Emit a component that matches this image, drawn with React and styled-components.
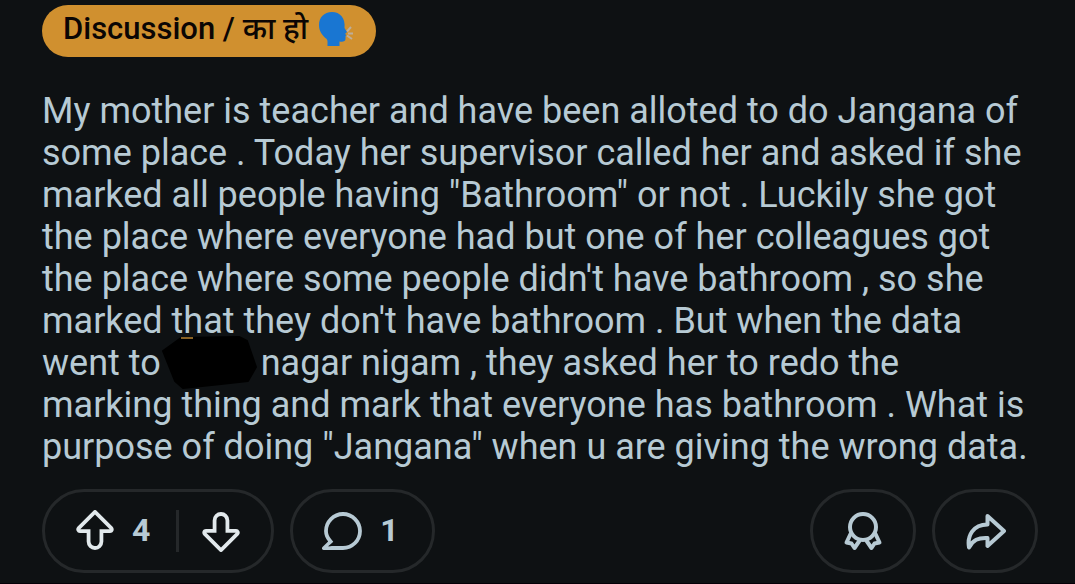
import React from 'react';
import styled, { createGlobalStyle } from 'styled-components';

const UPVOTE_PATH =
  'M10 19a3.966 3.966 0 01-3.96-3.962V10.98H2.838a1.731 1.731 0 01-1.605-1.073 1.734 1.734 0 01.377-1.895L9.364.254a.925.925 0 011.272 0l7.754 7.759c.498.499.646 1.242.376 1.894-.27.652-.9 1.073-1.605 1.073h-3.202v4.058A3.965 3.965 0 019.999 19H10zM2.989 9.179H7.84v5.731c0 1.13.81 2.163 1.934 2.278a2.163 2.163 0 002.386-2.15V9.179h4.851L10 2.163 2.989 9.179z';
const COMMENT_PATH =
  'M10 1a9 9 0 00-9 9c0 1.947.79 3.58 1.935 4.957L.231 17.661A.784.784 0 00.785 19H10a9 9 0 009-9 9 9 0 00-9-9zm0 16.2H6.162c-.994.004-1.907.053-3.045.144l-.076-.188a36.981 36.981 0 002.328-2.087l-1.05-1.263C3.297 12.576 2.8 11.331 2.8 10c0-3.97 3.23-7.2 7.2-7.2s7.2 3.23 7.2 7.2-3.23 7.2-7.2 7.2z';

function VoteIcon({ down }) {
  return (
    <Icon viewBox="0 0 20 20" $flip={down}>
      <path d={UPVOTE_PATH} fill="currentColor" />
    </Icon>
  );
}

function CommentIcon() {
  return (
    <Icon viewBox="0 0 20 20">
      <path d={COMMENT_PATH} fill="currentColor" />
    </Icon>
  );
}

function AwardIcon() {
  return (
    <LineIcon viewBox="0 0 42 42">
      <circle cx="21" cy="17" r="13" />
      <path d="M8.500 24L4.500 32.500L9.500 33.500L12.500 38L18 30" />
      <path d="M33.500 24L37.500 32.500L32.500 33.500L29.500 38L24 30" />
    </LineIcon>
  );
}

function ShareIcon() {
  return (
    <LineIcon viewBox="0 0 42 42">
      <path d="M23.500 6L40 21L23.500 36V28C14 27.500 9 30 5 37.500C3 26 9 14.500 23.500 14.500Z" />
    </LineIcon>
  );
}

function SpeakingHead() {
  return (
    <Emoji viewBox="0 0 34 34" aria-hidden="true">
      <path
        d="M13 0C5 0 0 5.500 0 13C0 19 3 23 7 26.500C9 28 8.500 30 8.500 34H20.500V29.500C24 30 26.500 29.500 26.500 27V24L27.500 23L26 22L28 20L25.500 16C26.500 6 21 0 13 0Z"
        fill="#1976d2"
      />
      <path
        d="M28 19.500L32 15M29 21.500H34M28 23.500L33 27"
        fill="none"
        stroke="#bcae9c"
        strokeWidth="2"
      />
    </Emoji>
  );
}

export default function App() {
  return (
    <>
      <GlobalStyle />
      <Post>
        <Flair href="#discussion">
          Discussion / का हो
          <SpeakingHead />
        </Flair>
        <Body>
          My mother is teacher and have been alloted to do Jangana of
          <br />
          some place . Today her supervisor called her and asked if she
          <br />
          marked all people having "Bathroom" or not . Luckily she got
          <br />
          the place where everyone had but one of her colleagues got
          <br />
          the place where some people didn't have bathroom , so she
          <br />
          marked that they don't have bathroom . But when the data
          <br />
          went to
          <Redaction>
            <svg viewBox="0 0 100 56" width="100" height="56">
              <path
                d="M2 17L20 4L78 3L86 7L95 33L87 47L60 50L22 54L14 47Z"
                fill="#000"
                stroke="#000"
                strokeWidth="2"
                strokeLinejoin="round"
              />
              <path d="M20 4H32" stroke="#8a6224" strokeWidth="2" />
            </svg>
          </Redaction>
          nagar nigam , they asked her to redo the
          <br />
          marking thing and mark that everyone has bathroom . What is
          <br />
          purpose of doing "Jangana" when u are giving the wrong data.
        </Body>
        <Actions>
          <Pill>
            <VoteButton aria-label="Upvote">
              <VoteIcon />
              <Count>4</Count>
            </VoteButton>
            <Divider />
            <VoteButton aria-label="Downvote">
              <VoteIcon down />
            </VoteButton>
          </Pill>
          <PillButton aria-label="Comments" $end={33}>
            <CommentIcon />
            <Count>1</Count>
          </PillButton>
          <Spacer />
          <PillButton aria-label="Award">
            <AwardIcon />
          </PillButton>
          <PillButton aria-label="Share">
            <ShareIcon />
          </PillButton>
        </Actions>
      </Post>
    </>
  );
}

const GlobalStyle = createGlobalStyle`
  * {
    box-sizing: border-box;
  }
  body {
    margin: 0;
    background-color: #0e1113;
    font-family: Roboto, "Noto Sans", "Noto Sans Devanagari", sans-serif;
  }
`;

const Post = styled.article`
  display: flex;
  flex-direction: column;
  align-items: flex-start;
  padding: 5px 37px 10px 42px;
  border-bottom: 1px solid #040006;
`;

const Flair = styled.a`
  display: flex;
  align-items: center;
  gap: 11px;
  height: 52px;
  padding: 0 23px 4px 21px;
  border-radius: 26px;
  background-color: #d0902f;
  color: #0b0604;
  font-size: 31px;
  font-weight: 500;
  line-height: 40px;
  text-decoration: none;
  white-space: nowrap;
`;

const Emoji = styled.svg`
  width: 34px;
  height: 34px;
`;

const Body = styled.p`
  margin: 33px 0 21px;
  color: #b7cad4;
  font-size: 36px;
  line-height: 42px;
`;

const Redaction = styled.span`
  display: inline-block;
  position: relative;
  width: 100px;
  height: 28px;
  svg {
    position: absolute;
    left: 0;
    bottom: -15px;
  }
`;

const Actions = styled.div`
  display: flex;
  gap: 16px;
  width: 100%;
`;

const Pill = styled.div`
  display: flex;
  align-items: center;
  height: 84px;
  padding: 0 ${({ $end = 29 }) => $end}px 0 29px;
  border: 3px solid #25282a;
  border-radius: 42px;
  color: #e2e9ec;
`;

const VoteButton = styled.button`
  display: flex;
  align-items: center;
  gap: 16px;
  padding: 0;
  border: 0;
  background: none;
  color: inherit;
  font: inherit;
  cursor: pointer;
`;

const PillButton = styled(Pill).attrs({ as: 'button' })`
  gap: 16px;
  background: none;
  color: #b7cad4;
  font: inherit;
  cursor: pointer;
`;

const Icon = styled.svg`
  display: block;
  width: 42px;
  height: 42px;
  transform: ${({ $flip }) => ($flip ? 'rotate(180deg)' : 'none')};
`;

const LineIcon = styled(Icon)`
  fill: none;
  stroke: currentColor;
  stroke-width: 4px;
  stroke-linejoin: round;
  stroke-linecap: round;
`;

const Count = styled.span`
  padding-bottom: 2px;
  color: #b7cad4;
  font-size: 32px;
  font-weight: 700;
  line-height: 40px;
`;

const Divider = styled.span`
  width: 3px;
  height: 42px;
  margin: 0 21px 0 26px;
  background-color: #25282a;
`;

const Spacer = styled.div`
  flex: 1;
`;
